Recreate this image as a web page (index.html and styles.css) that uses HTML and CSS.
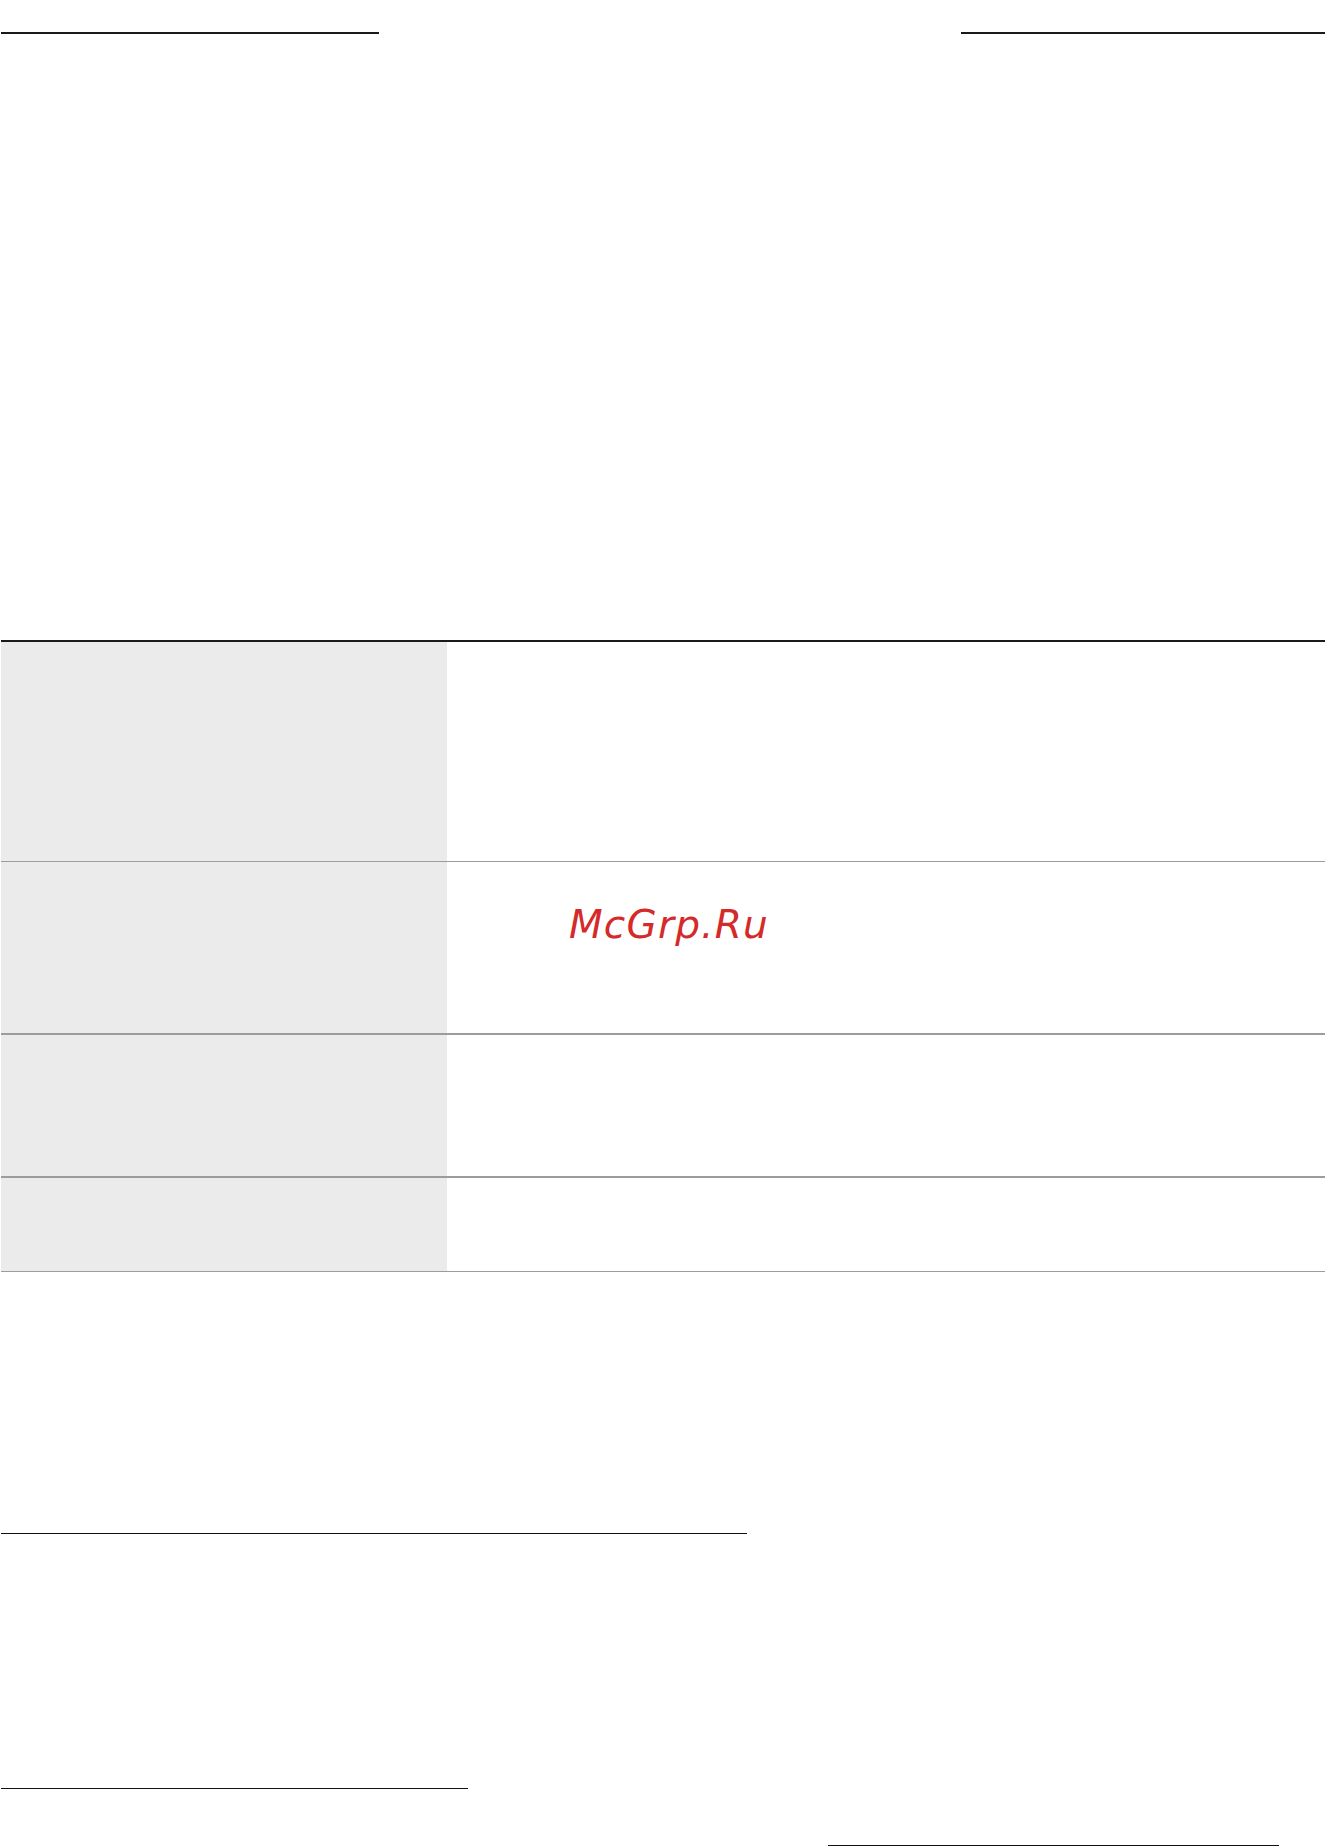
FILE: index.html
```html
<!DOCTYPE html>
<html lang="ru">
<head>
<meta charset="utf-8">
<title>McGrp.Ru</title>
<link rel="stylesheet" href="styles.css">
</head>
<body>
<div class="page">
  <div class="top-rules">
    <div class="rule rule-left"></div>
    <div class="rule rule-right"></div>
  </div>
  <div class="spec-table">
    <div class="row row-1">
      <div class="cell-label"></div>
      <div class="cell-value"></div>
    </div>
    <div class="row row-2">
      <div class="cell-label"></div>
      <div class="cell-value"><span class="watermark">McGrp.Ru</span></div>
    </div>
    <div class="row row-3">
      <div class="cell-label"></div>
      <div class="cell-value"></div>
    </div>
    <div class="row row-4">
      <div class="cell-label"></div>
      <div class="cell-value"></div>
    </div>
  </div>
  <div class="foot-rule foot-rule-1"></div>
  <div class="foot-rule foot-rule-2"></div>
  <div class="foot-rule foot-rule-3"></div>
</div>
</body>
</html>
```
FILE: styles.css
```css
html, body {
  margin: 0;
  padding: 0;
  background: #ffffff;
}
body {
  font-family: "DejaVu Sans", sans-serif;
  overflow: hidden;
}
.page {
  width: 1325px;
  height: 1846px;
  overflow: hidden;
}
.top-rules {
  display: flex;
  justify-content: space-between;
  padding-top: 32px;
  padding-left: 1px;
}
.rule {
  height: 2px;
  background: #1a1a1a;
}
.rule-left {
  width: 378px;
}
.rule-right {
  width: 364px;
}
.spec-table {
  margin-top: 606px;
  margin-left: 1px;
  border-top: 2px solid #1a1a1a;
}
.row {
  display: grid;
  grid-template-columns: 446px 1fr;
}
.cell-label {
  background: #ebebeb;
}
.row-1 {
  height: 219px;
  border-bottom: 1px solid #9c9c9c;
}
.row-2 {
  height: 171px;
  border-bottom: 2px solid #9c9c9c;
}
.row-3 {
  height: 141px;
  border-bottom: 2px solid #9c9c9c;
}
.row-4 {
  height: 93px;
  border-bottom: 1px solid #9c9c9c;
}
.row-2 .cell-value {
  padding-top: 43px;
  padding-left: 122px;
}
.watermark {
  display: block;
  font-family: "DejaVu Sans", sans-serif;
  font-style: oblique;
  font-size: 39px;
  line-height: 39px;
  letter-spacing: 1.2px;
  color: #d42a2a;
}
.foot-rule {
  height: 1px;
  background: #111111;
}
.foot-rule-1 {
  margin-top: 261px;
  margin-left: 1px;
  width: 746px;
}
.foot-rule-2 {
  margin-top: 254px;
  margin-left: 1px;
  width: 467px;
}
.foot-rule-3 {
  margin-top: 56px;
  margin-left: 828px;
  width: 451px;
}
```
